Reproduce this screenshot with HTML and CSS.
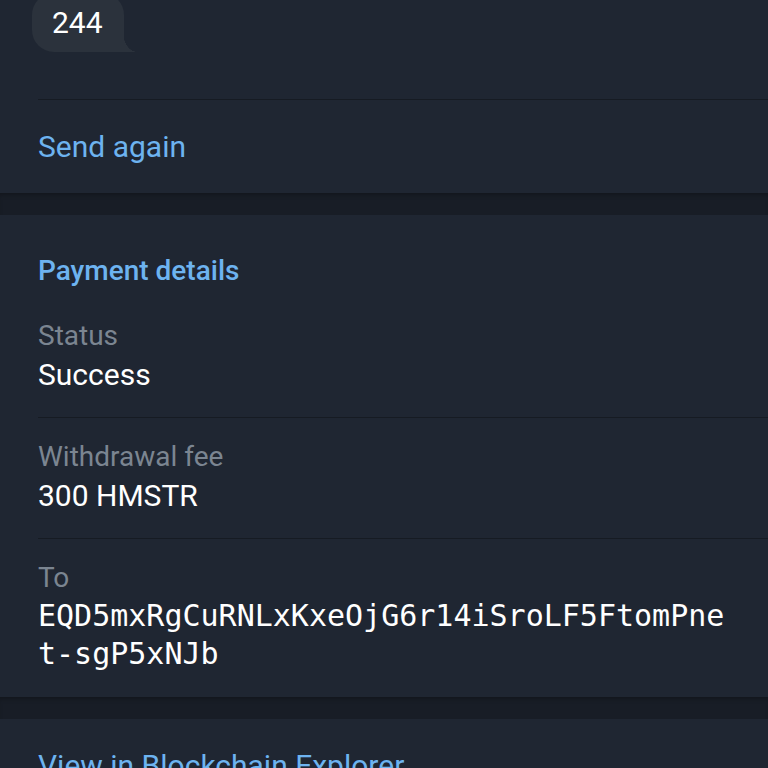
FILE: index.html
```html
<!DOCTYPE html>
<html lang="en">
<head>
  <meta charset="utf-8">
  <title>Transaction</title>
  <link rel="stylesheet" href="styles.css">
</head>
<body>

  <div class="panel">
    <div class="message-row">
      <div class="bubble">244</div>
    </div>
    <div class="action-row divided">
      <a class="action" href="#">Send again</a>
    </div>
  </div>

  <div class="gap"></div>

  <div class="panel details">
    <h3 class="section-title">Payment details</h3>
    <div class="field">
      <div class="label">Status</div>
      <div class="value">Success</div>
    </div>
    <div class="field">
      <div class="label">Withdrawal fee</div>
      <div class="value">300 HMSTR</div>
    </div>
    <div class="field last">
      <div class="label">To</div>
      <div class="value mono">EQD5mxRgCuRNLxKxeOjG6r14iSroLF5FtomPnet-sgP5xNJb</div>
    </div>
  </div>

  <div class="gap"></div>

  <div class="panel">
    <div class="action-row">
      <a class="action" href="#">View in Blockchain Explorer</a>
    </div>
  </div>

</body>
</html>
```

FILE: styles.css
```css
html {
  height: 100%;
}
body {
  margin: 0;
  padding: 0;
  background: #1f2632;
  color: #ffffff;
  font-family: Roboto, "Noto Sans", sans-serif;
  overflow: hidden;
}

.panel {
  background: #1f2632;
}

.gap {
  height: 22px;
  background: #181d26;
  box-shadow: inset 0 4px 4px -2px rgba(0,0,0,0.25);
}

/* message bubble */
.message-row {
  padding: 0 0 47px 32px;
  margin-top: -7px;
}
.bubble {
  position: relative;
  display: inline-block;
  background: #2b323c;
  border-radius: 22px 22px 0 22px;
  padding: 10px 21px 9px 20px;
  font-size: 30px;
  line-height: 40px;
}
.bubble:after {
  content: "";
  position: absolute;
  right: -13px;
  bottom: 0;
  width: 14px;
  height: 20px;
  background: radial-gradient(ellipse 14px 20px at 100% 0, transparent 98%, #2b323c 100%);
}

/* rows */
.action-row {
  padding: 27px 38px 26px 38px;
}
.action-row.divided {
  margin-left: 38px;
  padding-left: 0;
  border-top: 1px solid #161b23;
}
.action {
  display: block;
  color: #6db3f0;
  font-size: 30px;
  line-height: 40px;
  text-decoration: none;
}

/* payment details */
.details {
  padding: 36px 0 24px 0;
}
.section-title {
  margin: 0 0 7px 38px;
  color: #6db3f0;
  font-size: 28px;
  font-weight: 500;
  line-height: 39px;
}
.field {
  margin-left: 38px;
  padding: 19px 38px 22px 0;
  border-bottom: 1px solid #161b23;
}
.field.last {
  padding-bottom: 0;
  border-bottom: 0;
}
.label {
  color: #7b8591;
  font-size: 28px;
  line-height: 39px;
}
.value {
  font-size: 30px;
  line-height: 40px;
}
.value.mono {
  font-family: "DejaVu Sans Mono", "Liberation Mono", monospace;
  line-height: 38px;
  word-break: break-all;
}
```
